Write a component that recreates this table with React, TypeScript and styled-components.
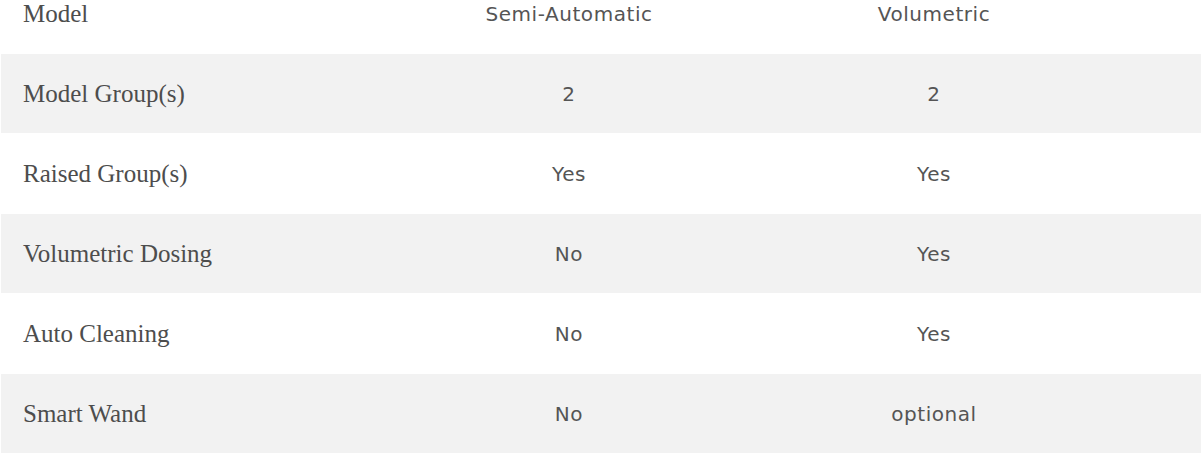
import React from "react";
import styled, { createGlobalStyle } from "styled-components";

const Global = createGlobalStyle`
  html, body { margin: 0; padding: 0; background: #ffffff; overflow: hidden; }
`;

const Table = styled.div`
  display: grid;
  row-gap: 1px;
  padding: 1px;
  margin-top: -27px;
  width: 1202px;
  box-sizing: border-box;
`;

const Row = styled.div<{ $shaded?: boolean }>`
  display: grid;
  grid-template-columns: 385px 366px 364px 1fr;
  height: 79px;
  align-items: center;
  background: ${(p) => (p.$shaded ? "#f2f2f2" : "#ffffff")};
`;

const Label = styled.div`
  padding-left: 22px;
  font-family: "Liberation Serif", "Times New Roman", serif;
  font-size: 25px;
  color: #4d4d4d;
  white-space: nowrap;
`;

const Cell = styled.div`
  text-align: center;
  font-family: "DejaVu Sans", "Open Sans", sans-serif;
  font-size: 20px;
  letter-spacing: 0.55px;
  color: #555555;
  white-space: nowrap;
`;

const rows: [string, string, string][] = [
  ["Model", "Semi-Automatic", "Volumetric"],
  ["Model Group(s)", "2", "2"],
  ["Raised Group(s)", "Yes", "Yes"],
  ["Volumetric Dosing", "No", "Yes"],
  ["Auto Cleaning", "No", "Yes"],
  ["Smart Wand", "No", "optional"],
];

export default function App() {
  return (
    <>
      <Global />
      <Table>
        {rows.map((r, i) => (
          <Row key={r[0]} $shaded={i % 2 === 1}>
            <Label>{r[0]}</Label>
            <Cell>{r[1]}</Cell>
            <Cell>{r[2]}</Cell>
            <div />
          </Row>
        ))}
      </Table>
    </>
  );
}
